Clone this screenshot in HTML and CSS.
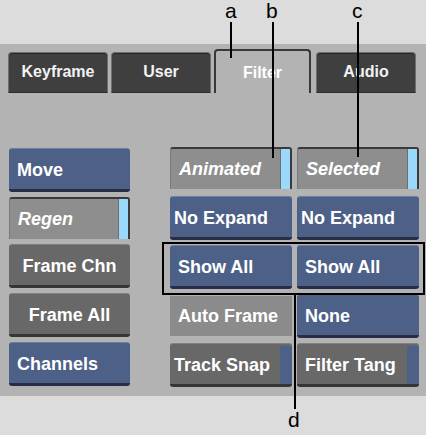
FILE: index.html
```html
<!DOCTYPE html>
<html lang="en">
<head>
  <meta charset="UTF-8" />
  <title>Filter Panel</title>
  <link rel="stylesheet" href="styles.css">
</head>
<body>

  <div class="figure">
    <div class="top"></div>

    <div class="panel">
      <ul class="tabs">
        <li class="tab">Keyframe</li>
        <li class="tab">User</li>
        <li class="tab active">Filter</li>
        <li class="tab">Audio</li>
      </ul>

      <div class="controls">
        <div class="col left">
          <div class="btn blue">Move</div>
          <div class="btn toggle"><i>Regen</i><span class="ind"></span></div>
          <div class="btn dark center">Frame Chn</div>
          <div class="btn dark center">Frame All</div>
          <div class="btn blue">Channels</div>
        </div>

        <div class="grid">
          <div class="btn toggle"><i>Animated</i><span class="ind"></span></div>
          <div class="btn toggle"><i>Selected</i><span class="ind"></span></div>
          <div class="btn blue tight">No Expand</div>
          <div class="btn blue tight">No Expand</div>
          <div class="btn blue">Show All</div>
          <div class="btn blue">Show All</div>
          <div class="btn flat">Auto Frame</div>
          <div class="btn blue">None</div>
          <div class="btn dark split tight">Track Snap<span class="edge"></span></div>
          <div class="btn dark split">Filter Tang<span class="edge"></span></div>
        </div>
      </div>
    </div>

    <div class="bottom"></div>

    <!-- callouts -->
    <span class="label la">a</span>
    <span class="label lb">b</span>
    <span class="label lc">c</span>
    <span class="label ld">d</span>
    <span class="line line-a"></span>
    <span class="line line-b"></span>
    <span class="line line-c"></span>
    <span class="line line-d"></span>
    <span class="box"></span>
  </div>

</body>
</html>
```

FILE: styles.css
```css
* {
  margin: 0;
  padding: 0;
  box-sizing: border-box;
}

body {
  background: #dcdcdc;
  font-family: 'Liberation Sans', Arial, sans-serif;
}

.figure {
  position: relative;
  width: 426px;
  height: 435px;
}

.top {
  height: 44px;
}

.panel {
  background: #b3b3b3;
  height: 352px;
  padding-top: 8px;
}

.bottom {
  height: 39px;
}

/* tabs */
.tabs {
  list-style: none;
  display: flex;
  align-items: flex-end;
  gap: 3px;
  padding-left: 8px;
  height: 41px;
}

.tab {
  width: 100px;
  height: 41px;
  background: #3f3f3f;
  border: 1px solid #6e6e6e;
  border-bottom: 1px solid #2c2c2c;
  border-radius: 4px 4px 0 0;
  color: #f2f2f2;
  font-weight: bold;
  font-size: 16px;
  line-height: 38px;
  text-align: center;
  box-shadow: inset 0 1px 0 #262626;
}

.tab.active {
  width: 97px;
  height: 44px;
  background: #b3b3b3;
  border: 2px solid #383838;
  border-bottom: none;
  box-shadow: none;
  color: #fff;
  line-height: 44px;
  margin-right: 2px;
}

/* controls */
.controls {
  display: flex;
  padding: 55px 0 0 9px;
}

.col {
  display: flex;
  flex-direction: column;
  gap: 5px;
  width: 121px;
}

.grid {
  display: grid;
  grid-template-columns: 122px 122px;
  grid-auto-rows: 44px;
  gap: 5px;
  margin-left: 40px;
  margin-top: -1px;
}

.btn {
  position: relative;
  height: 44px;
  color: #fff;
  font-weight: bold;
  font-size: 18px;
  line-height: 42px;
  padding-left: 8px;
  border-radius: 3px;
  white-space: nowrap;
  overflow: hidden;
}

.btn.tight {
  padding-left: 4px;
}

.btn.center {
  text-align: center;
  padding-left: 0;
}

.blue {
  background: #4d6188;
  border-top: 1px solid #6c7fa3;
  border-bottom: 3px solid #272d45;
}

.dark {
  background: #686868;
  border-top: 1px solid #808080;
  border-bottom: 3px solid #353535;
}

.flat {
  background: #8b8b8b;
  height: 40px;
  margin-top: 2px;
  line-height: 40px;
  border-radius: 0;
}

.toggle {
  background: #8e8e8e;
  border-top: 2px solid #3a3a3a;
  border-right: 2px solid #3a3a3a;
  border-left: 1px solid #7a7a7a;
  border-radius: 3px 3px 0 0;
  height: 42px;
  line-height: 40px;
}

.toggle i {
  font-size: 18px;
}

.ind {
  position: absolute;
  top: 0;
  right: 0;
  width: 10px;
  height: 100%;
  background: #9ad8fc;
  border-left: 1px solid #6f6f6f;
}

.split .edge {
  position: absolute;
  top: 2px;
  right: 0;
  width: 12px;
  height: 100%;
  background: #4d6188;
  border-radius: 0 3px 0 0;
}

/* callouts */
.label {
  position: absolute;
  top: -1px;
  font-family: 'Liberation Sans', Arial, sans-serif;
  font-size: 21px;
  color: #000;
}

.la { left: 225px; }
.lb { left: 266px; }
.lc { left: 352px; }
.ld { left: 288px; top: 408px; }

.line {
  position: absolute;
  width: 2px;
  background: #000;
}

.line-a { left: 230px; top: 22px; height: 36px; }
.line-b { left: 272px; top: 22px; height: 136px; }
.line-c { left: 357px; top: 22px; height: 135px; }
.line-d { left: 294px; top: 294px; height: 115px; }

.box {
  position: absolute;
  left: 162px;
  top: 242px;
  width: 263px;
  height: 53px;
  border: 2px solid #000;
}
```
